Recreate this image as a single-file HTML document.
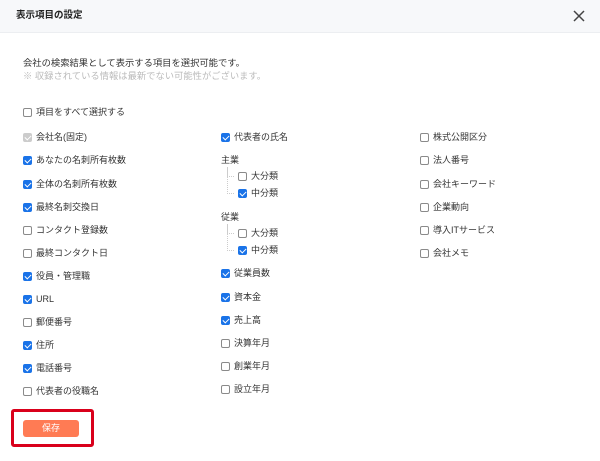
<!DOCTYPE html>
<html><head><meta charset="utf-8"><style>
*{margin:0;padding:0;box-sizing:border-box}
body{width:600px;height:461px;background:#fff;font-family:"Liberation Sans","Noto Sans CJK JP",sans-serif;color:#333;font-size:9px;position:relative;overflow:hidden}
.hd{position:absolute;left:0;top:0;width:600px;height:33px;background:#f7f8fa;border-bottom:1px solid #eceef1}
.t{position:absolute;white-space:nowrap;line-height:12px}
.cb{position:absolute;width:9px;height:9px;border:1px solid #8a8a8a;border-radius:2px;background:#fff}
.cb.on{background:#1a73e8;border-color:#1a73e8}
.cb.dis{background:#ccc;border-color:#ccc}
.cb.on::after,.cb.dis::after{content:"";position:absolute;left:2px;top:0px;width:3px;height:5px;border:solid #fff;border-width:0 1.5px 1.5px 0;transform:rotate(45deg)}
.ln{position:absolute;border-left:1px dotted #ccc;border-bottom:1px dotted #ccc;width:7px}
</style></head><body>
<div class="hd"></div>
<div class="t" style="left:16px;top:10px;font-size:9.5px;font-weight:bold;color:#222">表示項目の設定</div>
<svg style="position:absolute;left:573px;top:10px" width="12" height="12"><path d="M1 1L11 11M11 1L1 11" stroke="#444" stroke-width="1.5"/></svg>
<div class="t" style="left:23px;top:57px;font-size:9.3px">会社の検索結果として表示する項目を選択可能です。</div>
<div class="t" style="left:23px;top:70px;color:#bbb;font-size:9.3px">※ 収録されている情報は最新でない可能性がございます。</div>
<div id="c"></div>
<div style="position:absolute;left:11px;top:409px;width:83px;height:38px;border:3px solid #d9001b;border-radius:3px"></div>
<div style="position:absolute;left:23px;top:420px;width:56px;height:17px;background:#ff7b54;border-radius:3px;color:#fff;text-align:center;line-height:17px;font-size:9px">保存</div>
<script>
const items=[
[23,112,'項目をすべて選択する',0],
[23,137,'会社名(固定)',2],[23,160,'あなたの名刺所有枚数',1],[23,184,'全体の名刺所有枚数',1],[23,207,'最終名刺交換日',1],[23,230,'コンタクト登録数',0],[23,253,'最終コンタクト日',0],[23,276,'役員・管理職',1],[23,299,'URL',1],[23,322,'郵便番号',0],[23,345,'住所',1],[23,368,'電話番号',1],[23,391,'代表者の役職名',0],
[221,137,'代表者の氏名',1],[238,176,'大分類',0],[238,193,'中分類',1],[238,233,'大分類',0],[238,250,'中分類',1],[221,273,'従業員数',1],[221,297,'資本金',1],[221,320,'売上高',1],[221,343,'決算年月',0],[221,366,'創業年月',0],[221,389,'設立年月',0],
[420,137,'株式公開区分',0],[420,160,'法人番号',0],[420,184,'会社キーワード',0],[420,207,'企業動向',0],[420,230,'導入ITサービス',0],[420,253,'会社メモ',0]];
let h='';
for(const [x,y,s,st] of items){
h+=`<div class="cb ${st==1?'on':st==2?'dis':''}" style="left:${x}px;top:${y-4}px"></div><div class="t" style="left:${x+13}px;top:${y-6}px">${s}</div>`;}
h+=`<div class="t" style="left:221px;top:154px">主業</div><div class="t" style="left:221px;top:211px">従業</div>`;
h+=`<div class="ln" style="left:227px;top:167px;height:10px"></div><div class="ln" style="left:227px;top:167px;height:27px"></div>`;
h+=`<div class="ln" style="left:227px;top:224px;height:10px"></div><div class="ln" style="left:227px;top:224px;height:27px"></div>`;
document.getElementById('c').innerHTML=h;
</script>
</body></html>
